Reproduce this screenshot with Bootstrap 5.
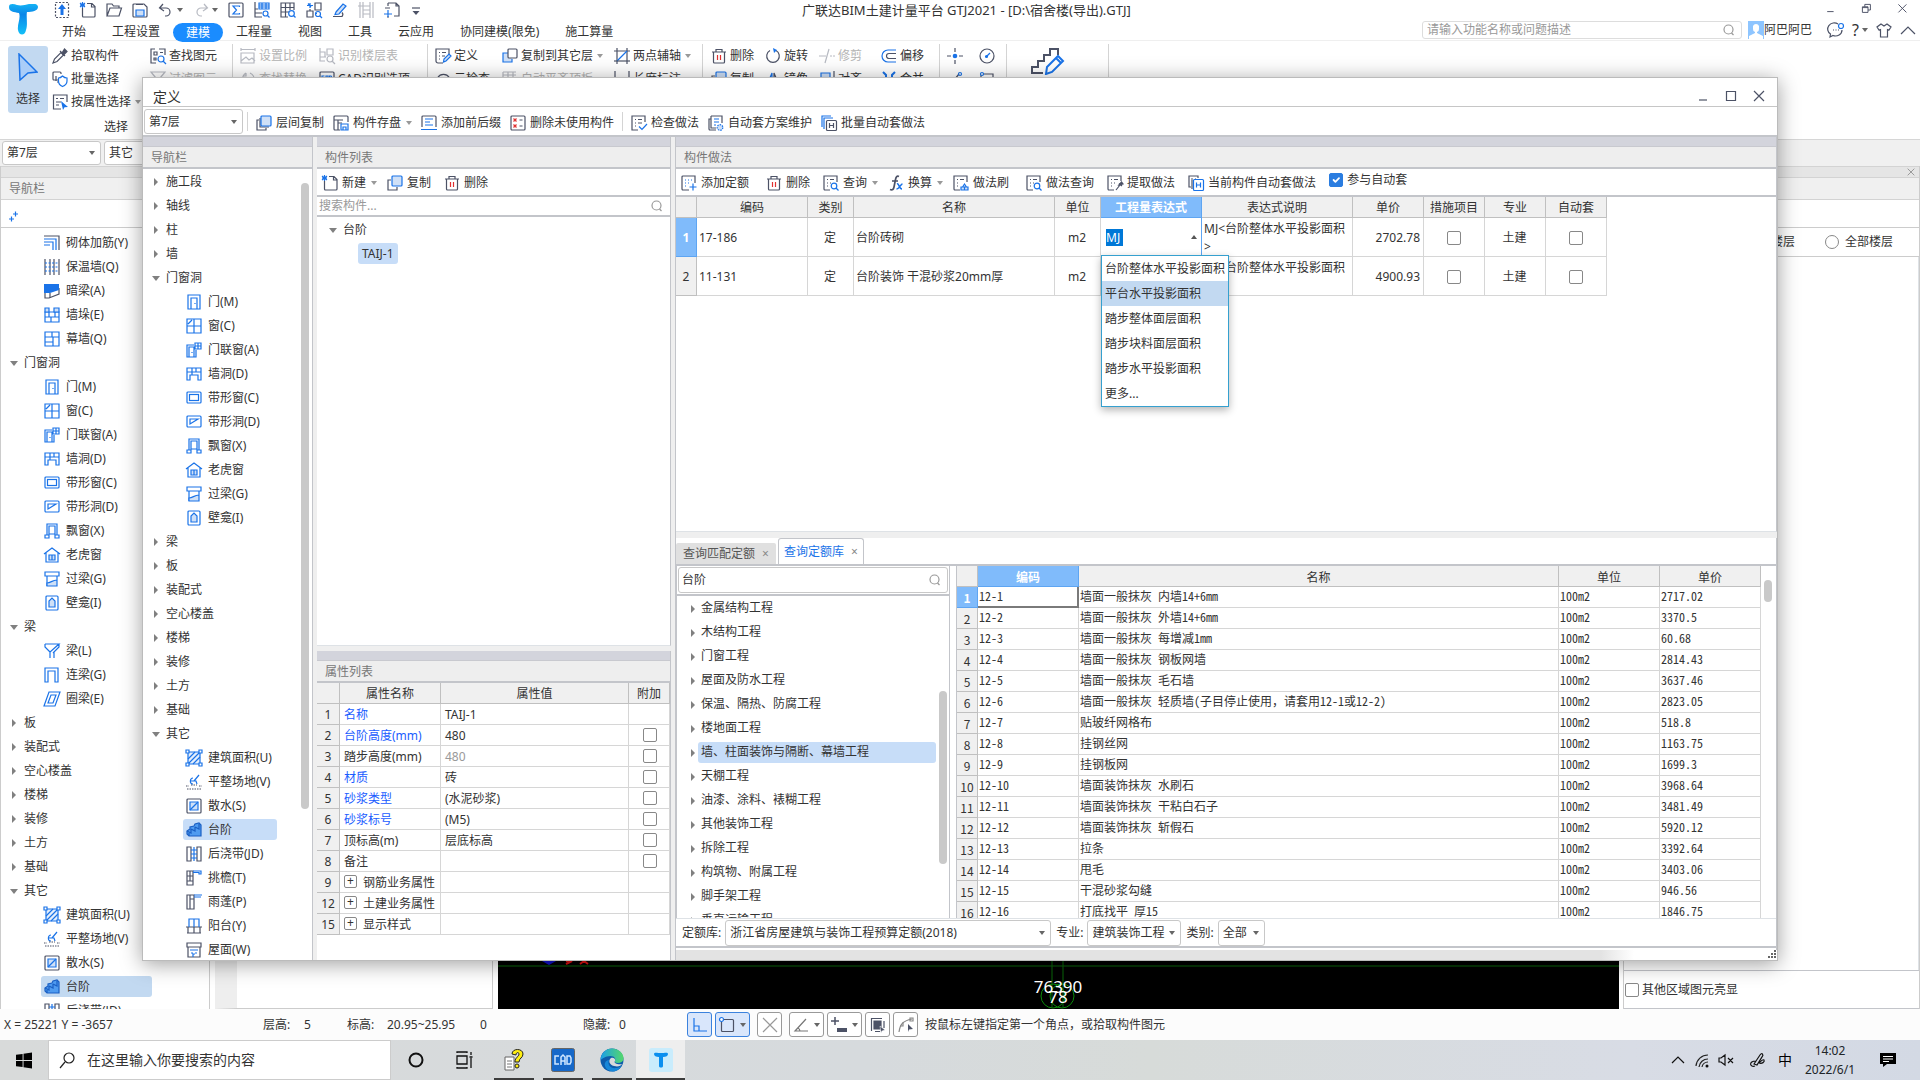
<!DOCTYPE html>
<html lang="zh-CN">
<head>
<meta charset="utf-8">
<meta name="viewport" content="width=device-width, initial-scale=1">
<title>广联达BIM土建计量平台 GTJ2021</title>
<link href="https://cdn.jsdelivr.net/npm/bootstrap@5.3.0/dist/css/bootstrap.min.css" rel="stylesheet">
<style>
:root{--ink:#4c5266;--blue:#1a73e8;--pale:#cfe0f7;--line:#c3c5ca;--soft:#d6d6d6}
body{font:12px/20px "Noto Sans","Noto Sans CJK SC",sans-serif;color:#333;background:#fff}
.desktop{height:100vh;position:relative;overflow:hidden}
svg.ic{width:16px;height:16px;flex:none;fill:none;stroke:var(--ink);stroke-width:1.2;overflow:visible}
svg.off{opacity:.4}
button{border:0;background:none;padding:0;color:inherit;font:inherit;white-space:nowrap}
input,select{font:inherit;color:inherit}
a{color:inherit;text-decoration:none}
.tool{display:flex;align-items:center;gap:4px}
.tool:disabled{color:#b4b4b4}
.caret-d::after,.combo::after{content:"";border:3px solid transparent;border-top:4px solid #666;border-bottom:0;flex:none}
.caret-d::after{margin-left:3px}
.tool.caret-d::after{margin:0 -3px 0 1px;border-top-color:#999}
.combo{position:relative;display:block}
.combo::after{position:absolute;right:6px;top:50%;margin-top:-2px;pointer-events:none}
.combo select{appearance:none;width:100%;height:100%;border:1px solid #c8c8c8;border-radius:3px;background:#fff;padding:0 12px 0 4px;display:block}
.vline{width:1px;background:#d4d4d4;flex:none}

/* main window head */
.app-top{height:41px;border-bottom:1px solid #efefef}
.logo-box{width:62px}
.logo-box svg{width:30px;height:31px;margin:4px 0 0 8px}
.quick{height:20px;gap:10px;width:748px;margin-left:-8px}
.win-title{font-size:13px}
.menu-row{height:20px}
.menu-row nav{align-self:flex-start;padding-top:2px}
.menu-row a{margin-right:26px}
.menu-row a.on{background:#1a8cff;color:#fff;border-radius:10px;padding:0 13px;margin:0 13px 0 -13px;line-height:19px}
.fn-search{width:320px;height:18px;border:1px solid #ddd;border-radius:3px;padding:0 4px}
.avatar{margin-left:6px}
.fn-search input,.seek input{border:0;outline:0;width:100%;background:none;padding:0;height:16px}
.fn-search input::placeholder,.seek input::placeholder{color:#999}
.win-btns{gap:20px}

/* ribbon */
.ribbon{height:98px;padding:3px 0 0 8px}
.ribbon .tool{gap:3px}
.pick-btn{width:40px;height:67px;margin-top:2px;background:#c2d9f1;border-radius:3px;padding-top:2px}
.pick-btn svg{width:20px;height:28px;display:block;margin:0 auto 8px}
.rgroup{display:grid;grid-auto-rows:23px;align-content:start;padding-left:7px}
.g-pick{grid-template-columns:98px 82px;padding-left:4px;width:184px}
.g-cad{grid-template-columns:79px 107px;width:194px}
.g-gen{grid-template-columns:67px 112px 88px;width:274px}
.g-edit{grid-template-columns:54px 54px 62px 59px;width:236px;padding-left:8px}
.g-draw{grid-template-columns:32px 26px;width:66px}
.g-stair{width:101px;padding-left:24px}
.g-stair svg{width:34px;height:28px;margin-top:3px}

/* main window body */
.bar-main{height:27px;background:#f0f0f0;border-top:1px solid #d6d6d6;padding:1px 2px;gap:3px}
.bar-main .combo{width:99px;height:24px}
.strip-m{height:11px;background:#e5e5e5;border-top:1px solid #d3d3d3}
.head-m{height:23px;background:#f0f0f0;border:solid #d3d3d3;border-width:1px 0;padding-left:8px;color:#777;line-height:22px}
.side-l{width:210px;border-right:1px solid #ccc;border-left:1px solid #ccc;overflow:hidden}
.side-m{width:278px;margin-left:5px;border:1px solid #ccc;border-width:0 1px 1px;border-left-width:22px;border-left-color:#eee}
.side-r{width:297px;margin-left:4px;border-left:1px solid #ccc;border-right:1px solid #ccc}
.plus-row{height:28px;border-bottom:1px solid #ccc;padding:5px 0 0 7px}
.canvas{background:#000;margin-left:5px;position:relative}
.canvas svg{position:absolute;left:0;bottom:0;width:100%;height:48px}
.blank-row{height:27px}
.floor-row{height:30px;border:1px solid #ccc;border-width:1px 0;gap:6px;padding-right:26px}
.floor-row input,.area-row input,.chk{appearance:none;width:14px;height:14px;border:1px solid #888;border-radius:2px;background-color:#fff;margin:0;flex:none;display:inline-block;vertical-align:middle}
.chk.form-check-input{border-radius:2px;width:14px;height:14px}
.chk.form-check-input:checked{background-color:#2b7de0;border-color:#2b7de0}
.floor-row input{border-radius:50%}
.area-row{height:39px;border:1px solid #c3c5ca;border-width:1px 0;gap:3px;padding-left:1px}

.tree{list-style:none;margin:0;padding:0}
.tree li{height:24px;display:flex;align-items:center;white-space:nowrap;padding-top:1px}
.tree .tw{width:8px;flex:none;display:flex;justify-content:center}
.tw::before{content:"";border:3px solid transparent;border-left:4px solid #808080;border-right:0;border-top-width:4px;border-bottom-width:4px}
.tw.open::before{border:4px solid transparent;border-top:5px solid #808080;border-bottom:0}
.tree .branch{gap:6px;padding-left:9px}
.tree .leaf .hit{display:flex;align-items:center;gap:6px;height:21px;margin-left:40px;padding:0 4px 0 3px;border-radius:3px}
.tree .leaf.cur .hit{background:#c7ddf8;width:94px}
.tree span{padding-top:1px}
.side-l .leaf.cur .hit{background:#c2d9f1;width:111px}
.side-l .tree{padding-top:2px}

/* status + taskbar */
.status{height:31px;background:#fcfcfc;white-space:nowrap}
.readout{width:687px}
.sbtn{height:25px;border:1px solid #999;border-radius:3px;background:#fff;display:flex;align-items:center;justify-content:center;width:25px;margin-right:3px}
.sbtn.wide{width:35px}
.sbtn.wide svg{margin-right:2px}
.sbtn.on{background:#d9e6fb;border-color:#3b82dd}
.taskbar{height:40px;background:linear-gradient(90deg,#d8dada,#d6dadd 45%,#d7dbd9 60%,#d8dce5 85%,#d3d9e4)}
.find-box{width:343px;background:#fff;border:1px solid #ccc;font-size:14px;gap:12px;padding-left:10px}
.find-box input{border:0;outline:0;padding:0;width:260px}
.find-box input::placeholder{color:#333}
.tb-app{width:49px;padding:0 4px;position:relative}
.tb-app svg{width:24px;height:24px}
.tb-app span{position:absolute;left:5px;right:4px;bottom:0;height:2px;background:#3c3c3c}
.tb-app.live{background:#eee}
.tb-app.live span{left:0;right:0}
.clock{line-height:19px;width:60px}
.ime{font-size:14px;line-height:16px;color:#000}

/* definition dialog */
.dlg{position:absolute;left:142px;right:142px;top:77px;bottom:119px;background:#fff;border:1px solid #bbb;box-shadow:0 3px 20px rgba(0,0,0,.38);display:flex;flex-direction:column}
.dlg-title{height:29px;border-bottom:1px solid #c6c6c6;padding:8px 10px 0 10px;font-size:14px;line-height:22px;flex:none}
.dlg-tools{height:30px;border-bottom:2px solid var(--line);padding:1px 0 0 1px;flex:none}
.dlg-tools .combo{width:99px;height:25px}
.dlg-tools .tool{margin-left:9px;padding-top:2px}
.dlg-body{background:#efefef}
.pane{background:#fff;border-right:1px solid var(--line)}
.strip{height:9px;background:#d3d4dc;flex:none}
.head{height:23px;background:#eee;border-top:1px solid #c8c9cf;border-bottom:2px solid var(--line);color:#777;padding-left:8px;line-height:21px;flex:none}
.tools{height:28px;border-bottom:2px solid var(--line);flex:none;padding-left:5px;gap:13px}
.tools .tool{padding-top:2px}
.nav-col{width:170px;position:relative}
.mid-col{width:354px;margin-left:4px}
.mid-low{height:309px;margin-top:5px}
.right-col{margin-left:4px;border-left:1px solid var(--line)}
.seek{height:20px;border-bottom:2px solid var(--line);padding:0 5px 0 2px}
.chosen{background:#c7ddf8;border-radius:3px;padding:0 4px;margin-left:41px;height:21px}
.thumb{position:absolute;width:8px;border-radius:4px;background:#c9c9c9}
.nav-thumb{right:3px;top:46px;height:626px}

.sheet{border-collapse:separate;border-spacing:0;table-layout:fixed}
.sheet th,.sheet td{border:solid var(--soft);border-width:0 1px 1px 0;padding:0 3px;overflow:hidden;white-space:nowrap;text-overflow:clip}
.sheet thead th{background:#f0f0f0;font-weight:400;text-align:center;border-color:#c0c0c0;height:21px;line-height:18px;padding-top:2px}
.sheet tbody th{background:#f0f0f0;font-weight:400;text-align:center;border-color:#c0c0c0;padding:0}
.sheet .hot{background:#80bbfb!important;color:#fff;font-weight:700!important;border-color:#5ea5f2!important}
.props tbody td,.props tbody th{height:21px;line-height:18px;padding-top:2px}
.props td{padding-left:4px}
.props .key{color:#1a5cff}
.props .dim{color:#999}
.props .chk{vertical-align:-2px}
.props .plus{width:13px;height:13px;border:1px solid #888;border-radius:2px;line-height:10px;font-size:12px;margin-right:6px;display:inline-block;text-align:center;vertical-align:2px}
.quota{width:930px}
.quota td,.quota tbody th{height:39px;line-height:19px}
.quota td{padding-left:2px}
.quota td.wrap2{white-space:normal;vertical-align:top;word-break:break-all;line-height:18px;padding:2px 4px 0 2px}
.quota .edit{border-color:#5ea5f2}
.edit input{background:#0078d7;color:#fff;border:0;width:17px;padding:0;height:17px;margin-left:3px}
.up-mark{border:3px solid transparent;border-bottom:4px solid #555;border-top:0;margin-right:1px}
.suggest{position:absolute;z-index:2;left:958px;top:177px;border:1px solid #35a0cf;background:#fff;box-shadow:0 3px 8px rgba(0,0,0,.3);list-style:none;margin:0;padding:0;width:128px}
.suggest li{height:25px;line-height:25px;padding-left:3px;white-space:nowrap}
.suggest .cur{background:#c2d9f1}

.low{height:412px;margin-top:6px;background:#fff;flex:none;border-right:1px solid var(--line)}
.tabs{height:28px;border-bottom:2px solid var(--line)}
.tabs button{height:21px;background:#e0e0e0;color:#555;padding:0 7px;display:flex;align-items:center;gap:7px;border-radius:2px 2px 0 0}
.tabs button.on{height:26px;background:#fff;color:var(--blue);border:1px solid var(--line);border-bottom:0;border-radius:3px 3px 0 0;margin-left:2px;padding:0 5px}
.tabs small{color:#888;font-size:12px}
.low-body{height:352px}
.lib-col{width:274px;border:1px solid var(--line);border-width:0 1px;position:relative}
.lib-seek{height:30px;border-bottom:2px solid var(--line);padding:1px}
.lib-seek div{height:26px;border:1px solid #c8c8c8;border-radius:3px;padding:0 4px 0 3px}
.lib-seek input{border:0;outline:0;padding:0;width:100%;height:20px}
.lib-tree .branch{padding-left:12px;gap:1px}
.lib-tree .txt{height:21px;padding:0 3px;border-radius:3px}
.lib-tree .cur .txt{background:#c7ddf8;width:238px}
.lib-thumb{right:2px;top:125px;height:173px}
.lib-grid{margin-left:6px;border-left:1px solid var(--line);position:relative;padding-right:15px}
.norms{width:100%;font-family:"Noto Sans CJK SC",sans-serif}
.norms td{font-feature-settings:"hwid"}
.norms td i{font-feature-settings:normal;font-style:normal}
.norms tbody td,.norms tbody th{height:21px;line-height:17px}
.norms tbody td{padding:0 1px 3px 1px}
.norms .focus{border:solid #7a7a7a;border-width:0 2px 2px 0;padding-bottom:2px}
.grid-thumb{right:4px;top:14px;height:22px}
.low-bar{height:30px;border-bottom:2px solid var(--line);padding:1px 0 0 6px;gap:4px}
.low-bar .combo{height:26px;margin-right:1px}
.foot{height:10px;flex:none;background:linear-gradient(90deg,#e3e3e3 84%,#fff 87%)}
.foot svg{width:9px;height:9px;fill:#666}
</style>
</head>
<body>
<svg width="0" height="0" class="position-absolute" aria-hidden="true"><defs>
<g id="doc"><path d="M5 15H3.500a1 1 0 0 1-1-1V6M7 1.500h5l3 3V14a1 1 0 0 1-1 1H4M11.500 1.500V5H15"/><path d="M0 1l5 4M5 1L0 5M2.500 0v6M0 3h5" stroke="#1a73e8"/></g>
<g id="up"><path d="M1.500 .5h13v15h-13z" stroke-dasharray="2 1.500"/><path d="M8 2l4 5H9.500v6h-3V7H4z" fill="#1a73e8" stroke="none"/></g>
<g id="folder"><path d="M1 14V2h5l1.500 2H13v2M1 14L4 6h11.500L13 14z"/></g>
<g id="save"><path d="M1 3a1 1 0 0 1 1-1h10l3 3v9a1 1 0 0 1-1 1H2a1 1 0 0 1-1-1zM4 2.500h7"/><path d="M4 14V8h8v6z" fill="#cfe0f7" stroke="#1a73e8"/></g>
<g id="undo"><path d="M5 2L1.500 6 6 9M2 6h6a4 4 0 0 1 0 8H7"/></g>
<g id="redo"><path d="M11 2l3.500 4L10 9M14 6H8a4 4 0 0 0 0 8h1"/></g>
<g id="sum"><rect x="1" y="1" width="14" height="14" rx="1"/><path d="M11.500 5V4H5l3.500 4L5 12h6.500v-1" stroke="#1a73e8"/></g>
<g id="tabq"><path d="M1 0v15h7M1 11h7M1 7h3"/><path d="M5 1h10v6H5zM5 3h10M5 5h10M8 1v6M12 1v6" stroke="#1a73e8"/><circle cx="11.500" cy="11.500" r="2.500" stroke="#1a73e8"/><path d="M13.500 13.500l2 2" stroke="#1a73e8"/></g>
<g id="gridq"><path d="M8 15H1V1h13v7M1 5.500h13M1 10h8M5.500 1v14M10 1v7"/><circle cx="11.500" cy="11.500" r="2.800" stroke="#1a73e8"/><path d="M13.500 13.500l2 2" stroke="#1a73e8"/></g>
<g id="treeq"><path d="M9 1h6v7H9zM1 9v6h6V9zM4 9V7"/><path d="M4 1v5M1 3.500h6M2 1.500L5 5M9 11.500h2" stroke="#1a73e8"/><circle cx="12" cy="12" r="2.500" stroke="#1a73e8"/><path d="M14 14l2 2" stroke="#1a73e8"/></g>
<g id="pen"><path d="M1 14.500h9a3 3 0 0 0 0-4"/><path d="M4 10L11 2l3 2-7 8-4 .5z" fill="#cfe0f7" stroke="#1a73e8"/></g>
<g id="rebar"><path d="M2 0v16M5 0v16M12 0v16M15 0v16M0 4h5M5 4h7M5 8h7M5 12h7"/></g>
<g id="frame"><path d="M4 1h8l3 3v10h-5M4 1v3M12 1v3h3M6 6H1M5 15H3"/><path d="M4 8v7M0 12h8" stroke="#1a73e8"/></g>
<g id="more"><path d="M2 6h8"/><path d="M2.500 9h7L6 13z" fill="#4c5266" stroke="none"/></g>
<g id="dropper"><path d="M1 15l1.500-4L9 4.500 11.500 7 5 13.500z"/><path d="M8 3l5 5M10 5l2.500-4 2.500 2.500L11.500 7z" fill="#4c5266"/></g>
<g id="multi"><path d="M6 9H2a1 1 0 0 1-1-1V2a1 1 0 0 1 1-1h6a1 1 0 0 1 1 1v1"/><path d="M7 11H5M4 10V5" /><path d="M6.500 7c2 0 3-1 4-2 1 1 2.500 2 4.500 2v3c0 2.500-2 4.500-4.500 5.500-2.500-1-4-3-4-5.500z" fill="#fff" stroke="#1a73e8"/></g>
<g id="listcur"><path d="M9 15H1.500V1H15v7M4 4.500h2M8 4.500h4M4 8h5M4 11h3"/><path d="M9 7l7 6-3.500 .3L11 16z" fill="#1a73e8" stroke="none"/></g>
<g id="findel"><path d="M5 1H1v14h5M9 1h6v6"/><path d="M4 4h3v3H4zM4 10h2v2H4zM10 4.500h3" /><circle cx="11" cy="11" r="3" stroke="#1a73e8"/><path d="M13 13l3 3" stroke="#1a73e8"/></g>
<g id="funnel"><path d="M1 1h14L10 7v8l-4-2V7z"/></g>
<g id="scale"><path d="M1 3V0M15 3V0M1 1.500h14M3 5h11v10H1V5zM1 13l5-4 3 3 3-2 3 3"/></g>
<g id="swap"><path d="M6 2a7 7 0 0 0 0 12M10 2a7 7 0 0 1 4 8M6 2v3H3"/></g>
<g id="floorq"><path d="M1 0v13h5M1 4h5v5M8 1h6v6H8zM1 9h6"/><circle cx="11" cy="11" r="3"/><path d="M13 13l3 3"/></g>
<g id="cad"><path d="M1 13V2a1 1 0 0 1 1-1h12a1 1 0 0 1 1 1v11"/><path d="M5.500 5H3v3h2.500M7 8.500V5h2v3.500M10.500 5h1.500l1 1.500L12 8h-1.500z" stroke="#1a73e8"/></g>
<g id="listpen"><path d="M8 15H3a2 2 0 0 1-2-2V1h13v5M4 4.500h1M7 4.500h4M4 8h1M7 8h3M4 11h1"/><path d="M8.500 14l.5-3 5-5 2 2-5 5z" fill="#cfe0f7" stroke="#1a73e8"/></g>
<g id="cloudchk"><path d="M2 13a7 7 0 1 1 13 0"/><circle cx="8" cy="10" r="3"/></g>
<g id="copyl"><path d="M6 5H1v9h9v-3" stroke="#1a73e8" fill="#cfe0f7"/><rect x="6" y="1" width="9" height="9" rx="1" fill="#fff"/></g>
<g id="align2"><path d="M1 1v12M6 1v12M11 1v12M1 1h13M1 4h13"/></g>
<g id="axis2"><path d="M3 0v16M13 0v16M0 3h16"/><path d="M3 13L13 3" stroke="#1a73e8"/><path d="M0 13h16"/></g>
<g id="dim"><path d="M1 0v12M15 0v12M1 8h14"/></g>
<g id="trash"><path d="M1 4h14M5 4V1.500h6V4M2.500 4v10a1 1 0 0 0 1 1h9a1 1 0 0 0 1-1V4"/><path d="M6.500 7v5M9.500 7v5" stroke="#e03030"/></g>
<g id="rotate"><path d="M5 2.500A6.300 6.300 0 1 0 11 2.500"/><path d="M8 0l4 2-3 3z" fill="#1a73e8" stroke="none"/></g>
<g id="trim"><path d="M0 8h7M11 8h2M14 8h2M10 1L6 15"/></g>
<g id="offset"><path d="M15 2H7a6 6 0 0 0 0 12h8" stroke="#1a73e8"/><path d="M15 5.500H8a2.500 2.500 0 0 0 0 5h7"/></g>
<g id="copy"><path d="M4 5H1v10h9v-3"/><rect x="5" y="1" width="10" height="10" rx="1" fill="#cfe0f7" stroke="#1a73e8"/></g>
<g id="mirror"><path d="M7 2v12H2z" fill="#cfe0f7" stroke="#1a73e8"/><path d="M9 2v12h5z"/></g>
<g id="alignr"><path d="M15 0v16"/><path d="M2 2h9v6H2z" fill="#cfe0f7" stroke="#1a73e8"/></g>
<g id="merge"><path d="M2 1l3 3v3M14 1l-3 3v3" stroke="#1a73e8" stroke-width="2"/></g>
<g id="pt"><path d="M8 0v4M8 12v4M0 8h4M12 8h4"/><circle cx="8" cy="8" r="2.300" fill="#1a73e8" stroke="none"/></g>
<g id="circ"><circle cx="8" cy="8" r="7"/><path d="M7 9l4-4" stroke="#1a73e8"/><circle cx="7.500" cy="8.500" r="1" stroke="#1a73e8"/></g>
<g id="seg"><path d="M3 14L12 3"/><circle cx="13" cy="3" r="1.500" stroke="#1a73e8"/></g>
<g id="rct"><path d="M2 12V3h12v9"/><circle cx="3" cy="3" r="1.500" stroke="#1a73e8" fill="#fff"/></g>
<g id="layers"><path d="M3 5H1v10h9v-2M4 3v9h9" stroke="#4c5266"/><rect x="5" y="1" width="10" height="10" rx="1" fill="#cfe0f7" stroke="#1a73e8"/></g>
<g id="disk"><path d="M7 15H2a1 1 0 0 1-1-1V2a1 1 0 0 1 1-1h12a1 1 0 0 1 1 1v5M1 5h9M5 5v10M5 8h4"/><path d="M8 9h7v6H8zM10 15v-3h3v3" stroke="#1a73e8"/></g>
<g id="affix"><path d="M1 12V2a1 1 0 0 1 1-1h12a1 1 0 0 1 1 1v10"/><path d="M4 4h8M4 7h5M4 10h8M0 14.500h16" stroke="#1a73e8"/></g>
<g id="delun"><rect x="1" y="1" width="14" height="14" rx="1"/><path d="M3.500 3.500l3 3M6.500 3.500l-3 3M3.500 9.500l3 3M6.500 9.500l-3 3" stroke="#e03030"/><path d="M9.500 5h3M9.500 11h3"/></g>
<g id="chkdoc"><path d="M7 15H1V1h13v6M4 4.500h1M7 4.500h4M4 8h1M7 8h4M4 11h1"/><path d="M8 11.500l3 3L16 9" stroke="#1a73e8"/></g>
<g id="gear"><path d="M8 15H2a1 1 0 0 1-1-1V4h2M3 1h11v7M3 1v12h5"/><path d="M6 4h5M6 7h5M6 10h2" stroke="#1a73e8"/><circle cx="12" cy="12.500" r="2.800" fill="#cfe0f7" stroke="#1a73e8" stroke-dasharray="1.500 1"/></g>
<g id="batchh"><path d="M1 12V1h9M3 14V3h9" stroke="#1a73e8"/><rect x="5.500" y="5.500" width="10" height="10" rx="1" fill="#fff"/><path d="M8.500 8v5M12.500 8v5M8.500 10.500h4"/></g>
<g id="addq"><path d="M8 15H2a1 1 0 0 1-1-1V2a1 1 0 0 1 1-1h12v7"/><path d="M4 5h1M7 5h1M10 5h1M4 8h1M7 8h1M4 11h1M12 8.500v7M8.500 12h7" stroke="#1a73e8"/></g>
<g id="query"><path d="M7 15H2a1 1 0 0 1-1-1V1h13v6M4 4.500h1M7 4.500h4M4 8h1M7 8h1M4 11h1"/><circle cx="11" cy="11" r="2.800" stroke="#1a73e8"/><path d="M13 13l2.500 2.500" stroke="#1a73e8"/></g>
<g id="fx"><path d="M11 1.500c-2-1-3 .5-3.500 3L6 12c-.5 2.500-1.500 3.500-4 2.500M4 6h6" stroke-width="1.700"/><path d="M9 9c2-1 2 5 5 5M14.500 9c-2 0-3 5-6 5" stroke="#1a73e8" stroke-width="1.500"/></g>
<g id="brush"><path d="M7 15H2a1 1 0 0 1-1-1V1h13v6M4 4.500h1M7 4.500h4M4 8h1M4 11h1"/><path d="M8 15v-3h7v3zM9.500 12l2-3 2 3M11.500 12.500V15" stroke="#1a73e8" fill="#cfe0f7"/></g>
<g id="extract"><path d="M7 15H2a1 1 0 0 1-1-1V1h13v5M4 4.500h1M7 4.500h4M4 8h1M7 8h1M4 11h1"/><path d="M9 15l4-5M12 8.500l3 2.500"/><path d="M12 10l2.500-3L16 9z" fill="#4c5266"/></g>
<g id="curh"><path d="M3 12H1V1h9v2M4 5v9M3 4h2M7 4h1"/><rect x="5.500" y="4.500" width="10" height="11" rx="1" fill="#fff" stroke="#1a73e8"/><path d="M8.500 7.500v5M12.500 7.500v5M8.500 10h4" stroke="#1a73e8"/></g>
<g id="mag"><circle cx="7.500" cy="7.500" r="4.500" stroke="#999"/><path d="M10.500 11l2 2" stroke="#999"/></g>
<g id="xx"><path d="M3 3l10 10M13 3L3 13"/></g>
<g id="rst"><path d="M3 6h7v7H3zM6 6V3h7v7h-3M3 7h7"/></g>
<g id="mn"><path d="M4 12h8"/></g><g id="mx"><path d="M3.500 3.500h9v9h-9z"/></g>
<g id="chat"><path d="M10 2A6.500 6 0 0 0 2.500 12L2 15l3-1.500A6.500 6 0 0 0 14 8"/><path d="M5 8h1M7.500 8h1M10 8h1"/><circle cx="13" cy="4" r="2.500" stroke="#1a73e8"/></g>
<g id="shirt"><path d="M5 2l3 2 3-2 4 3-2 3-1.500-.5V15h-7V7.500L3 8 1 5z"/></g>
<g id="chev"><path d="M1 12l7-7 7 7"/></g>
<!-- component icons -->
<g id="c-qt" stroke="#1a73e8"><path d="M0 4h12v11M0 7h9v8M0 10h6" /><path d="M0 1h15v14" stroke="#4c5266"/></g>
<g id="c-bw" ><path d="M1 0v16M6 0v16M10 0v16M15 0v16"/><path d="M1 4h14M1 8h14M1 12h14" stroke="#1a73e8" stroke-dasharray="2 1.500"/></g>
<g id="c-al"><path d="M1 5v10h4l10-4V5"/><path d="M0 1h15v6L6 10H0z" fill="#1a73e8" stroke="none"/><path d="M6 10v5"/></g>
<g id="c-qd" stroke="#1a73e8"><path d="M1 5h14v10H1zM1 10h14M7 10v5M5 5v5M11 5v5"/><path d="M1 1h4v4H1zM10 1h5v4h-5z" fill="#cfe0f7"/></g>
<g id="c-mq" stroke="#1a73e8"><path d="M1 1h14v14H1zM1 6h14M8 1v5M1 11h8M9 6v9"/></g>
<g id="c-m" stroke="#1a73e8"><path d="M2 1h12v14H2zM5 15V4h6v11M9 9v1"/></g>
<g id="c-c" stroke="#1a73e8"><path d="M1 1h14v14H1zM8 1v14M1 8h14M2 6l4-4"/></g>
<g id="c-ml" stroke="#1a73e8"><path d="M10 8v7H1V3h7M3 15V5h5v10M6 10v1M9 1h6v6H9zM12 1v6M9 4h6"/></g>
<g id="c-qdg" stroke="#1a73e8"><path d="M1 2h14v12h-3V9H4v5H1zM1 6h14M6 2v4M10 2v4M6 9V6"/></g>
<g id="c-dc" stroke="#1a73e8"><rect x="1" y="2" width="14" height="11" rx="1"/><rect x="3.500" y="4.500" width="9" height="6"/></g>
<g id="c-dd" stroke="#1a73e8"><rect x="1" y="2" width="14" height="11" rx="1"/><path d="M4 10V5h8z"/></g>
<g id="c-pc" stroke="#1a73e8"><path d="M3 12V1h10v11M5 12V3h6v9M1 12h4v3H1zM11 12h4v3h-4zM5 11h6"/></g>
<g id="c-lh" stroke="#1a73e8"><path d="M0 7l8-6 8 6M2 6v9h12V6"/><path d="M5 8h6v5H5zM8 8v5" fill="#cfe0f7"/></g>
<g id="c-gl" stroke="#1a73e8"><path d="M1 1h14v4H1zM3 5v10"/><path d="M3 12c4 0 5-3 10-3v6H3zM13 5v4" fill="#cfe0f7"/></g>
<g id="c-bk" stroke="#1a73e8"><rect x="2" y="1" width="12" height="14" rx="1"/><path d="M5 12V6l3-3 3 3v6z" fill="#cfe0f7"/></g>
<g id="c-ll" stroke="#1a73e8"><path d="M1 1h14L6 9v6M1 1v3l5 5M15 1v3L9 10M10 9v6M6 15V9"/></g>
<g id="c-lg" stroke="#1a73e8"><path d="M1 15V1h13v14h-3V4H4v11z"/></g>
<g id="c-ql" stroke="#1a73e8"><path d="M5 1h11l-5 14H0zM7 4h5l-3 8H4z"/></g>
<g id="c-jz" stroke="#1a73e8"><path d="M2 2h12v12H2z" fill="#e3eefc"/><path d="M2 9l7-7M2 14L14 2M7 14l7-7"/><path d="M0 0h3v3H0zM13 0h3v3h-3zM0 13h3v3H0zM13 13h3v3h-3z" fill="#fff"/></g>
<g id="c-pz"><path d="M7 10c-4 0-3-6 0-6M5 7h5l1 3M8 7l5-6" stroke="#1a73e8"/><path d="M0 12h3M5 11h6M13 12h3M1 15h14" stroke-dasharray="1.500 1"/></g>
<g id="c-ss"><rect x="1" y="1" width="14" height="14" rx="1"/><path d="M4 4h8v8H4z" fill="#cfe0f7" stroke="#1a73e8"/><path d="M4 12l8-8" stroke="#1a73e8"/></g>
<g id="c-tj" stroke="#1a5fc4"><path d="M1 9l3-2 0-2 4-1 1-2 4-1 2 2v11H3l-2-2z" fill="#4f9bf0"/><path d="M1 9l4 2V7M5 7l4 2V5M9 5l4 2V2M3 14v-3" /></g>
<g id="c-hj"><path d="M1 1h4v14H1zM11 1h4v14h-4z"/><path d="M5 4h6M5 8h6M5 12h6M8 1v14" stroke="#1a73e8"/></g>
<g id="c-ty"><path d="M1 1h6v14H1zM4 1v5M1 6h6M4 6v5M1 11h6"/><path d="M7 1h8v3h-2V2.500H7" stroke="#1a73e8"/></g>
<g id="c-yp"><path d="M1 1h7v14H1zM4 1v14M4 5h4"/><path d="M8 1h8M8 3h7" stroke="#1a73e8"/></g>
<g id="c-yt"><path d="M0 9h16M1 15h14M2 9v6M8 9v6M14 9v6"/><path d="M3 9V1h10v8M8 1v8" stroke="#1a73e8"/></g>
<g id="c-wm"><path d="M1 1h14v4H1zM2 5v10h12V5"/><path d="M4 8h8M5 11h2M9 11h2M7 15v-3h2" stroke="#1a73e8"/></g>
</defs></svg>

<div class="desktop d-flex flex-column">
  <header class="app-top d-flex flex-shrink-0">
    <div class="logo-box flex-shrink-0 position-relative">
      <svg viewBox="0 0 30 31" aria-label="GTJ"><defs><linearGradient id="lg" x1="0" y1="0" x2="0" y2="1"><stop offset="0" stop-color="#14b4f5"/><stop offset=".35" stop-color="#0a86e8"/><stop offset="1" stop-color="#12c0f8"/></linearGradient></defs><path d="M1 3c0-4 5-3 8-2 4 1 8 0 12-1 5-1 9 0 9 3 0 4-6 5-11 5-1 4 1 13-1 18-1 6-7 6-8 0-1-5 3-12 1-17-5-1-10-1-10-6z" fill="url(#lg)"/></svg>
      <svg class="position-absolute start-0 top-0" viewBox="0 0 30 31"><path d="M36 27v6h-6z" fill="#555"/></svg>
    </div>
    <div class="flex-grow-1">
      <div class="d-flex align-items-center">
        <div class="quick d-flex align-items-center" id="quick"></div>
        <div class="win-title flex-grow-1">广联达BIM土建计量平台 GTJ2021 - [D:\宿舍楼(导出).GTJ]</div>
        <div class="win-btns d-flex pe-2">
          <button aria-label="最小化"><svg class="ic d-block" viewBox="0 0 20 20"><use href="#mn"/></svg></button>
          <button aria-label="还原"><svg class="ic d-block" viewBox="0 0 20 20"><use href="#rst"/></svg></button>
          <button aria-label="关闭"><svg class="ic d-block" viewBox="0 0 20 20"><use href="#xx"/></svg></button>
        </div>
      </div>
      <div class="menu-row d-flex align-items-center">
        <nav class="d-flex flex-grow-1 align-items-center"><a href="#">开始</a><a href="#">工程设置</a><a href="#" class="on">建模</a><a href="#">工程量</a><a href="#">视图</a><a href="#">工具</a><a href="#">云应用</a><a href="#">协同建模(限免)</a><a href="#">施工算量</a></nav>
        <label class="fn-search d-flex align-items-center"><input type="text" placeholder="请输入功能名称或问题描述" aria-label="功能搜索"><svg class="ic" viewBox="0 0 16 16"><use href="#mag"/></svg></label>
        <svg class="avatar" width="16" height="18" viewBox="0 0 16 18"><rect width="16" height="18" fill="#8ec5ff"/><path d="M5 5a3.200 3.200 0 0 1 6 0v3a3 3 0 0 1-2 3v1l6 3v3H1v-3l6-3v-1a3 3 0 0 1-2-3z" fill="#fff"/></svg>
        <span>阿巴阿巴</span>
        <div class="d-flex align-items-center gap-2 ms-3 me-1">
          <svg class="ic" viewBox="0 0 16 16"><use href="#chat"/></svg>
          <button class="caret-d d-flex align-items-center fs-6" aria-label="帮助">?</button>
          <svg class="ic" viewBox="0 0 16 16"><use href="#shirt"/></svg>
          <svg class="ic" viewBox="0 0 16 16"><use href="#chev"/></svg>
        </div>
      </div>
    </div>
  </header>

  <section class="ribbon d-flex flex-shrink-0">
    <button class="pick-btn"><svg viewBox="0 0 20 28"><path d="M1 1l18 18-9 1-8 7z" fill="#a9cdf8" stroke="#1a73e8" stroke-width="1.500"/></svg>选择</button>
    <div>
      <div class="rgroup g-pick">
        <button class="tool" data-i="dropper">拾取构件</button><button class="tool" data-i="findel">查找图元</button>
        <button class="tool" data-i="multi">批量选择</button><button class="tool" disabled data-i="funnel">过滤图元</button>
        <button class="tool caret-d" data-i="listcur">按属性选择</button>
      </div>
      <div class="ps-5 pt-1 ms-2">选择</div>
    </div>
    <span class="vline"></span>
    <div class="rgroup g-cad">
      <button class="tool" disabled data-i="scale">设置比例</button><button class="tool" disabled data-i="floorq">识别楼层表</button>
      <button class="tool" disabled data-i="swap">查找替换</button><button class="tool" data-i="cad">CAD识别选项</button>
    </div>
    <span class="vline"></span>
    <div class="rgroup g-gen">
      <button class="tool" data-i="listpen">定义</button><button class="tool caret-d" data-i="copyl">复制到其它层</button><button class="tool caret-d" data-i="axis2">两点辅轴</button>
      <button class="tool" data-i="cloudchk">云检查</button><button class="tool" disabled data-i="align2">自动平齐顶板</button><button class="tool" data-i="dim">长度标注</button>
    </div>
    <span class="vline"></span>
    <div class="rgroup g-edit">
      <button class="tool" data-i="trash">删除</button><button class="tool" data-i="rotate">旋转</button><button class="tool" disabled data-i="trim">修剪</button><button class="tool" data-i="offset">偏移</button>
      <button class="tool" data-i="copy">复制</button><button class="tool" data-i="mirror">镜像</button><button class="tool" data-i="alignr">对齐</button><button class="tool" data-i="merge">合并</button>
    </div>
    <span class="vline"></span>
    <div class="rgroup g-draw">
      <button class="tool" data-i="pt" aria-label="点"></button><button class="tool" data-i="circ" aria-label="圆"></button>
      <button class="tool" data-i="seg" aria-label="直线"></button><button class="tool" data-i="rct" aria-label="矩形"></button>
    </div>
    <span class="vline"></span>
    <div class="g-stair"><svg viewBox="0 0 34 28" fill="none" stroke="#4c5266" stroke-width="2"><path d="M12 26H1v-6h6v-6h6V8h6V2h8v6"/><path d="M15 27l1-7L27 9l5 5-11 11zM25 11l5 5" stroke="#1a73e8"/></svg></div>
    <span class="vline"></span>
  </section>

  <main class="flex-grow-1 d-flex flex-column overflow-hidden">
    <div class="bar-main d-flex flex-shrink-0">
      <label class="combo"><select aria-label="楼层"><option>第7层</option></select></label>
      <label class="combo"><select aria-label="类型"><option>其它</option></select></label>
    </div>
    <div class="flex-grow-1 d-flex overflow-hidden">
      <aside class="side-l flex-shrink-0">
        <div class="strip-m"></div><div class="head-m">导航栏</div>
        <div class="plus-row"><svg class="ic" viewBox="0 0 16 16"><path d="M1 11h5M3.500 8.500v5M5 6h5M7.500 3.500v5" stroke="#1a73e8"/></svg></div>
        <ul class="tree" id="navMain"></ul>
      </aside>
      <div class="side-m flex-shrink-0"></div>
      <div class="canvas flex-grow-1">
        <svg viewBox="0 0 1121 48" fill="none"><path d="M0 5h1121M554 0v46M565 0v46" stroke="#0a6b0a"/><circle cx="555" cy="35" r="12" stroke="#0a8a0a"/><circle cx="564" cy="35" r="12" stroke="#0a8a0a"/><path d="M44 0h14l-7 4z" fill="#11c"/><path d="M68 0h6l-6 3M82 3l4-3 4 3" stroke="#d11" stroke-width="2"/><g fill="#fff" font-size="17" text-anchor="middle"><text x="560" y="32">76390</text><text x="560" y="42">78</text></g></svg>
      </div>
      <aside class="side-r flex-shrink-0 d-flex flex-column">
        <div class="strip-m d-flex justify-content-end align-items-center"><svg class="ic" viewBox="0 0 24 24"><path d="M7 7l10 10M17 7L7 17" stroke="#888"/></svg></div><div class="head-m"></div>
        <div class="blank-row"></div>
        <div class="floor-row d-flex align-items-center justify-content-end"><input type="radio" id="f1" name="fl"><label class="me-4" for="f1">当前楼层</label><input type="radio" id="f2" name="fl"><label for="f2">全部楼层</label></div>
        <div class="flex-grow-1 border-end"></div>
        <div class="area-row d-flex align-items-center"><input type="checkbox" id="ar"><label for="ar">其他区域图元亮显</label></div>
      </aside>
    </div>
  </main>

  <footer class="status d-flex align-items-center flex-shrink-0">
    <div class="readout d-flex"><span style="width:263px" class="ps-1">X = 25221 Y = -3657</span><span style="width:41px">层高:</span><span style="width:43px">5</span><span style="width:40px">标高:</span><span style="width:93px">20.95~25.95</span><span style="width:103px">0</span><span style="width:36px">隐藏:</span><span>0</span></div>
    <button class="sbtn on" aria-label="正交"><svg class="ic" viewBox="0 0 16 16"><path d="M2 1v13h13M2 9h5v5" stroke="#1a73e8"/></svg></button>
    <button class="sbtn wide on caret-d" aria-label="捕捉"><svg class="ic" viewBox="0 0 16 16"><rect x="2.500" y="2.500" width="12" height="12" rx="1"/><circle cx="2.500" cy="2.500" r="2" fill="#fff" stroke="#1a73e8"/></svg></button>
    <button class="sbtn ms-1" aria-label="交点"><svg class="ic" viewBox="0 0 16 16"><path d="M1 1l14 14M15 1L1 15" stroke="#999"/></svg></button>
    <button class="sbtn wide ms-1 caret-d" aria-label="角度"><svg class="ic" viewBox="0 0 16 16"><path d="M13 2L2 14h13M5 11a4 4 0 0 1 2 3" stroke="#777"/></svg></button>
    <button class="sbtn wide caret-d" aria-label="偏移量"><svg class="ic" viewBox="0 0 16 16"><path d="M0 4h8M4 0v8" stroke-width="1.500"/><path d="M6 11h10v4H6z" fill="#4c5266" stroke="none"/></svg></button>
    <button class="sbtn" aria-label="图层"><svg class="ic" viewBox="0 0 16 16"><path d="M4 4h7v8H4z" fill="#4c5266"/><path d="M1.500 14V1.500H12M14 4v7M5 14.500h5"/><path d="M10 9l5 4-3 1-1 2z" fill="#4c5266" stroke="#fff" stroke-width=".5"/></svg></button>
    <button class="sbtn" aria-label="弧线"><svg class="ic" viewBox="0 0 16 16"><path d="M1 15C2 8 4 4 14 2" stroke="#888"/><path d="M2 9h3v-3H4M12 1h3v3h-3z" stroke="#888"/><path d="M10 7l5 5-4 .5L10 15z" fill="#4c5266" stroke="none"/></svg></button>
    <span class="ps-1">按鼠标左键指定第一个角点，或拾取构件图元</span>
  </footer>

  <footer class="taskbar d-flex flex-shrink-0">
    <button class="px-3" aria-label="开始"><svg width="16" height="17" viewBox="0 0 17 17" class="d-block"><path d="M0 2.500L7 1.500V8H0zM8 1.400L17 0v8H8zM0 9h7v6.500l-7-1zM8 9h9v8l-9-1.400z"/></svg></button>
    <label class="find-box d-flex align-items-center"><svg class="ic" viewBox="0 0 16 16"><circle cx="10" cy="6" r="5" stroke="#222"/><path d="M6 10l-5 6" stroke="#222"/></svg><input type="text" placeholder="在这里输入你要搜索的内容" aria-label="搜索"></label>
    <div class="d-flex flex-grow-1">
      <button class="tb-app" aria-label="Cortana"><svg viewBox="0 0 24 24"><circle cx="12" cy="12" r="6.500" fill="none" stroke="#111" stroke-width="2"/></svg></button>
      <button class="tb-app pe-0 ps-0" aria-label="任务视图"><svg viewBox="0 0 24 24" fill="none" stroke="#111" stroke-width="1.300"><path d="M4 5V4h10v1M4 8h10v8H4zM4 19v1h10v-1M18 4v3M18 10v10M16.500 9h3"/></svg></button>
      <button class="tb-app" aria-label="帮助"><span></span><svg viewBox="0 0 24 24"><path d="M3 9h9v13H3z" fill="#fff" stroke="#666"/><path d="M5 13h5M5 16h5M5 19h5" stroke="#777"/><path d="M10 6c0-6 11-6 11 0 0 4-4 4-4 8h-4c0-5 4-5 4-8 0-2-3-2-3 1z" fill="#fe1" stroke="#222"/><circle cx="15" cy="18" r="2" fill="#fe1" stroke="#222"/></svg></button>
      <button class="tb-app" aria-label="CAD"><span></span><svg viewBox="0 0 24 24"><rect x=".5" y=".5" width="23" height="23" rx="2" fill="#1668c9" stroke="#666"/><path d="M8 8H4v8h4M10 17V9l2-2 2 2v8M10 13h4M16 8h3l1 2v4l-1 2h-3z" fill="none" stroke="#cfe6ff" stroke-width="1.500"/></svg></button>
      <button class="tb-app" aria-label="Edge"><span></span><svg viewBox="0 0 24 24"><defs><linearGradient id="eg" x1="0" x2="1"><stop offset="0" stop-color="#1a9fe8"/><stop offset="1" stop-color="#55d86a"/></linearGradient></defs><circle cx="12" cy="12" r="11.500" fill="#0d5cab"/><path d="M.5 12C1 5 6 .5 12 .5S24 5 23.500 11c-.5 4-6 5-9 3 2-3 0-6-4-6C5 8 2 11 .5 12z" fill="url(#eg)"/><path d="M9 12c-2 5 2 9 7 8 3 0 5-2 6-3-3 6-9 8-14 5-5-4-4-9 1-10z" fill="#1787d8"/><path d="M11 10c-3 2-2 7 3 8 4 1 7 0 8-2-4 1-9-1-7-3 1-2-2-4-4-3z" fill="#d8dadb"/></svg></button>
      <button class="tb-app live" aria-label="GTJ"><span></span><svg viewBox="0 0 24 24"><rect width="24" height="24" rx="3" fill="#c9ecfc"/><path d="M5 6c0-2 3-1 7-1s7-1 7 1-2 3-5 3v9c0 2-4 2-4 0V9C7 9 5 8 5 6z" fill="#0a8fef"/></svg></button>
    </div>
    <div class="d-flex align-items-center">
      <svg class="ic me-2" viewBox="0 0 16 16"><path d="M2 11l6-6 6 6" stroke="#111"/></svg>
      <svg class="ic me-2" viewBox="0 0 16 16" ><path d="M2 14A12 12 0 0 1 14 3M5 15a9 9 0 0 1 9-8M8 15a6 6 0 0 1 6-5" stroke="#222"/><circle cx="13" cy="14" r="1.500" fill="#111" stroke="none"/></svg>
      <svg class="ic me-3" viewBox="0 0 16 16"><path d="M1 6h2l4-3v10l-4-3H1zM10 6l5 5M15 6l-5 5" stroke="#111"/></svg>
      <svg class="ic me-2" viewBox="0 0 16 16"><path d="M4 12l6-9c2-3 4 0 2 2l-5 8zM6 9c-8 0-6 7-1 5M9 11c3 1 6-1 5-3-1-1-3 1-5 3" stroke="#111"/></svg>
      <span class="ime ms-1">中</span>
      <div class="clock text-center text-dark ms-2 me-1">14:02<br>2022/6/1</div>
      <svg class="ic me-4 ms-3" viewBox="0 0 16 16"><path d="M0 1h16v11H7l-4 3v-3H0z" fill="#000" stroke="none"/><path d="M3 4.500h10M3 7h10M3 9.500h6" stroke="#fff"/></svg>
    </div>
  </footer>

  <section class="dlg" role="dialog" aria-label="定义">
    <div class="dlg-title d-flex justify-content-between"><span>定义</span>
      <div class="d-flex gap-2 align-items-center">
        <button class="me-1" aria-label="最小化"><svg class="ic d-block" viewBox="0 0 16 16"><use href="#mn"/></svg></button>
        <button class="me-1" aria-label="最大化"><svg class="ic d-block" viewBox="0 0 16 16"><use href="#mx"/></svg></button>
        <button aria-label="关闭"><svg class="ic d-block" viewBox="0 0 16 16"><use href="#xx"/></svg></button>
      </div>
    </div>
    <div class="dlg-tools d-flex align-items-center">
      <label class="combo"><select aria-label="楼层"><option>第7层</option></select></label>
      <span class="vline align-self-stretch my-1 ms-1"></span>
      <button class="tool ms-2" data-i="layers">层间复制</button>
      <button class="tool caret-d" data-i="disk">构件存盘</button>
      <button class="tool ms-2 ps-1" data-i="affix">添加前后缀</button>
      <button class="tool" data-i="delun">删除未使用构件</button>
      <span class="vline align-self-stretch my-1 ms-2"></span>
      <button class="tool ms-2" data-i="chkdoc">检查做法</button>
      <button class="tool" data-i="gear">自动套方案维护</button>
      <button class="tool" data-i="batchh">批量自动套做法</button>
    </div>
    <div class="dlg-body d-flex flex-grow-1 overflow-hidden">
      <div class="pane nav-col flex-shrink-0 overflow-hidden">
        <div class="strip"></div><div class="head">导航栏</div>
        <ul class="tree" id="navDlg"></ul>
        <i class="thumb nav-thumb"></i>
      </div>
      <div class="mid-col flex-shrink-0 d-flex flex-column">
        <div class="pane flex-grow-1 border-bottom">
          <div class="strip"></div><div class="head">构件列表</div>
          <div class="tools d-flex align-items-center">
            <button class="tool caret-d" data-i="doc">新建</button><button class="tool" data-i="copy">复制</button><button class="tool" data-i="trash">删除</button>
          </div>
          <label class="seek d-flex align-items-center"><input type="text" placeholder="搜索构件..." aria-label="搜索构件"><svg class="ic" viewBox="0 0 16 16"><use href="#mag"/></svg></label>
          <ul class="tree"><li class="branch ps-2 ms-1"><span class="tw open"></span><span>台阶</span></li><li><span class="chosen">TAIJ-1</span></li></ul>
        </div>
        <div class="pane mid-low flex-shrink-0">
          <div class="strip"></div><div class="head">属性列表</div>
          <table class="sheet props w-100">
            <colgroup><col style="width:23px"><col style="width:101px"><col><col style="width:41px"></colgroup>
            <thead><tr><th></th><th>属性名称</th><th>属性值</th><th>附加</th></tr></thead><tbody id="props"></tbody>
          </table>
        </div>
      </div>
      <div class="right-col flex-grow-1 d-flex flex-column overflow-hidden">
        <div class="pane flex-grow-1 border-bottom">
          <div class="strip"></div><div class="head">构件做法</div>
          <div class="tools d-flex align-items-center">
            <button class="tool me-1" data-i="addq">添加定额</button><button class="tool" data-i="trash">删除</button><button class="tool caret-d" data-i="query">查询</button><button class="tool caret-d" data-i="fx">换算</button><button class="tool me-1" data-i="brush">做法刷</button><button class="tool" data-i="query">做法查询</button><button class="tool" data-i="extract">提取做法</button><button class="tool" data-i="curh">当前构件自动套做法</button>
            <div class="d-flex align-items-center gap-1 pb-1"><input class="form-check-input chk m-0" type="checkbox" checked id="auto"><label for="auto">参与自动套</label></div>
          </div>
          <table class="sheet quota">
            <colgroup id="quotaCols"></colgroup>
            <thead><tr><th></th><th>编码</th><th>类别</th><th>名称</th><th>单位</th><th class="hot">工程量表达式</th><th>表达式说明</th><th>单价</th><th>措施项目</th><th>专业</th><th>自动套</th></tr></thead>
            <tbody>
              <tr><th class="hot">1</th><td>17-186</td><td class="text-center">定</td><td>台阶砖砌</td><td class="text-center">m2</td><td class="edit"><div class="d-flex align-items-center justify-content-between"><input type="text" value="MJ" aria-label="工程量表达式"><i class="up-mark"></i></div></td><td class="wrap2">MJ&lt;台阶整体水平投影面积&gt;</td><td class="text-end">2702.78</td><td class="text-center"><input class="chk" type="checkbox" aria-label="措施项目"></td><td class="text-center">土建</td><td class="text-center"><input class="chk" type="checkbox" aria-label="自动套"></td></tr>
              <tr><th>2</th><td>11-131</td><td class="text-center">定</td><td>台阶装饰 干混砂浆20mm厚</td><td class="text-center">m2</td><td></td><td class="wrap2">MJ&lt;台阶整体水平投影面积</td><td class="text-end">4900.93</td><td class="text-center"><input class="chk" type="checkbox" aria-label="措施项目"></td><td class="text-center">土建</td><td class="text-center"><input class="chk" type="checkbox" aria-label="自动套"></td></tr>
            </tbody>
          </table>
        </div>
        <div class="low">
          <div class="tabs d-flex align-items-end"><button>查询匹配定额<small>×</small></button><button class="on">查询定额库<small>×</small></button></div>
          <div class="low-body d-flex">
            <div class="lib-col flex-shrink-0 overflow-hidden">
              <div class="lib-seek"><div class="d-flex align-items-center"><input type="text" value="台阶" aria-label="定额搜索"><svg class="ic" viewBox="0 0 16 16"><use href="#mag"/></svg></div></div>
              <ul class="tree lib-tree" id="lib"></ul>
              <i class="thumb lib-thumb"></i>
            </div>
            <div class="lib-grid flex-grow-1 overflow-hidden">
              <table class="sheet norms">
                <colgroup><col style="width:21px"><col style="width:101px"><col><col style="width:101px"><col style="width:101px"></colgroup>
                <thead><tr><th></th><th class="hot">编码</th><th>名称</th><th>单位</th><th>单价</th></tr></thead><tbody id="norms"></tbody>
              </table>
              <i class="thumb grid-thumb"></i>
            </div>
          </div>
          <div class="low-bar d-flex align-items-center border-top">
            <label for="s1">定额库:</label><span class="combo" style="width:326px"><select id="s1"><option>浙江省房屋建筑与装饰工程预算定额(2018)</option></select></span>
            <label for="s2">专业:</label><span class="combo" style="width:94px"><select id="s2"><option>建筑装饰工程</option></select></span>
            <label for="s3">类别:</label><span class="combo" style="width:47px"><select id="s3"><option>全部</option></select></span>
          </div>
        </div>
        <div class="foot d-flex justify-content-end"><svg viewBox="0 0 9 9"><path d="M6 0h2v2H6zM3 3h2v2H3zM6 3h2v2H6zM0 6h2v2H0zM3 6h2v2H3zM6 6h2v2H6z"/></svg></div>
      </div>
    </div>
    <ul class="suggest"><li>台阶整体水平投影面积</li><li class="cur">平台水平投影面积</li><li>踏步整体面层面积</li><li>踏步块料面层面积</li><li>踏步水平投影面积</li><li>更多...</li></ul>
  </section>
</div>

<script>
const $ = id => document.getElementById(id);
const icon = (n, c = '') => `<svg class="ic ${c}" viewBox="0 0 16 16"><use href="#${n}"/></svg>`;

document.querySelectorAll('[data-i]').forEach(b => b.insertAdjacentHTML('afterbegin', icon(b.dataset.i, b.disabled ? 'off' : '')));

$('quick').innerHTML = ['up','doc','folder','save','undo+','redo-','sum','tabq','gridq','treeq','pen','rebar-','frame','more']
  .map(n => { const k = n.replace(/[+-]/, ''); return `<button class="d-flex align-items-center ${n.includes('+') || k === 'redo' ? 'caret-d' : ''}" aria-label="${k}">${icon(k, n.includes('-') ? 'off' : '')}</button>`; }).join('');

// "+" opens a branch, ">" leaves it closed; [label, icon] is a leaf, "*" marks the current one
const openings = ['+门窗洞',['门(M)','c-m'],['窗(C)','c-c'],['门联窗(A)','c-ml'],['墙洞(D)','c-qdg'],['带形窗(C)','c-dc'],['带形洞(D)','c-dd'],['飘窗(X)','c-pc'],['老虎窗','c-lh'],['过梁(G)','c-gl'],['壁龛(I)','c-bk']];
const mids = ['>板','>装配式','>空心楼盖','>楼梯','>装修','>土方','>基础','+其它',['建筑面积(U)','c-jz'],['平整场地(V)','c-pz'],['散水(S)','c-ss'],['*台阶','c-tj'],['后浇带(JD)','c-hj']];
const tree = rows => rows.map(r => Array.isArray(r)
  ? `<li class="leaf ${r[0][0] === '*' ? 'cur' : ''}"><a href="#" class="hit">${icon(r[1])}<span>${r[0].replace('*', '')}</span></a></li>`
  : `<li class="branch"><span class="tw ${r[0] === '+' ? 'open' : ''}"></span><span>${r.slice(1)}</span></li>`).join('');
$('navMain').innerHTML = tree([['砌体加筋(Y)','c-qt'],['保温墙(Q)','c-bw'],['暗梁(A)','c-al'],['墙垛(E)','c-qd'],['幕墙(Q)','c-mq'],...openings,'+梁',['梁(L)','c-ll'],['连梁(G)','c-lg'],['圈梁(E)','c-ql'],...mids]);
$('navDlg').innerHTML = tree(['>施工段','>轴线','>柱','>墙',...openings,'>梁',...mids,['挑檐(T)','c-ty'],['雨蓬(P)','c-yp'],['阳台(Y)','c-yt'],['屋面(W)','c-wm']]);

$('lib').innerHTML = ['金属结构工程','木结构工程','门窗工程','屋面及防水工程','保温、隔热、防腐工程','楼地面工程','*墙、柱面装饰与隔断、幕墙工程','天棚工程','油漆、涂料、裱糊工程','其他装饰工程','拆除工程','构筑物、附属工程','脚手架工程','垂直运输工程']
  .map(t => `<li class="branch ${t[0] === '*' ? 'cur' : ''}"><span class="tw"></span><span class="txt">${t.replace('*', '')}</span></li>`).join('');

$('props').innerHTML = [[1,'名称','TAIJ-1','key',0],[2,'台阶高度(mm)','480','key',1],[3,'踏步高度(mm)','480','',1,'dim'],[4,'材质','砖','key',1],[5,'砂浆类型','(水泥砂浆)','key',1],[6,'砂浆标号','(M5)','key',1],[7,'顶标高(m)','层底标高','',1],[8,'备注','','',1],[9,'钢筋业务属性','','g',0],[12,'土建业务属性','','g',0],[15,'显示样式','','g',0]]
  .map(([n,k,v,c,b,d]) => `<tr><th>${n}</th><td class="${c}">${c === 'g' ? '<span class="plus">+</span>' : ''}${k}</td><td class="${d || ''}">${v}</td><td class="text-center">${b ? `<input class="chk" type="checkbox" aria-label="附加 ${k}">` : ''}</td></tr>`).join('');

$('quotaCols').innerHTML = [21,111,46,201,46,101,151,71,61,61,61].map(w => `<col style="width:${w}px">`).join('');

$('norms').innerHTML = [['墙面一般抹灰 内墙14+6mm','2717.02'],['墙面一般抹灰 外墙14+6mm','3370.5'],['墙面一般抹灰 每增减1mm','60.68'],['墙面一般抹灰 钢板网墙','2814.43'],['墙面一般抹灰 毛石墙','3637.46'],['墙面一般抹灰 轻质墙(子目停止使用，请套用12-1或12-2)','2823.05'],['贴玻纤网格布','518.8'],['挂钢丝网','1163.75'],['挂钢板网','1699.3'],['墙面装饰抹灰 水刷石','3968.64'],['墙面装饰抹灰 干粘白石子','3481.49'],['墙面装饰抹灰 斩假石','5920.12'],['拉条','3392.64'],['甩毛','3403.06'],['干混砂浆勾缝','946.56'],['打底找平 厚15','1846.75']]
  .map(([t,p],i) => `<tr><th class="${i ? '' : 'hot'}">${i+1}</th><td class="${i ? '' : 'focus'}">12-${i+1}</td><td>${t.replace('，', '<i>，</i>')}</td><td>100m2</td><td>${p}</td></tr>`).join('');
</script>
<script src="https://cdn.jsdelivr.net/npm/bootstrap@5.3.0/dist/js/bootstrap.bundle.min.js"></script>
</body>
</html>
